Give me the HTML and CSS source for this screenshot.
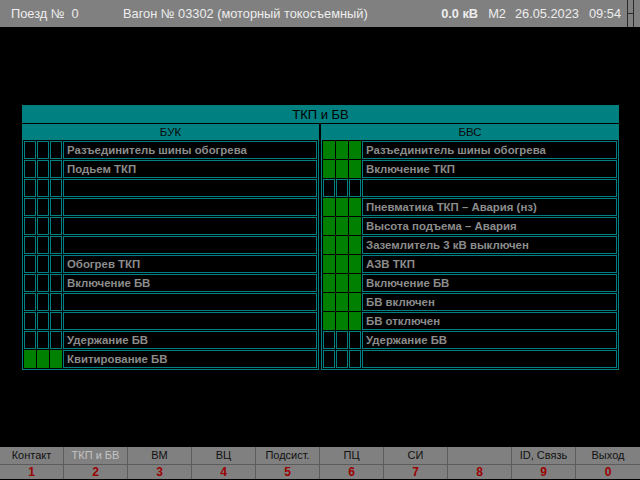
FILE: index.html
```html
<!DOCTYPE html>
<html lang="ru">
<head>
<meta charset="utf-8">
<title>ТКП и БВ</title>
<link rel="stylesheet" href="styles.css">
</head>
<body>
<div class="screen">
  <header class="topbar">
    <span class="train">Поезд №  0</span>
    <span class="wagon">Вагон № 03302 (моторный токосъемный)</span>
    <span class="status">
      <b class="volt">0.0 кВ</b>
      <span class="mode">M2</span>
      <span class="date">26.05.2023</span>
      <span class="time">09:54</span>
    </span>
    <span class="gadget"><i></i></span>
  </header>

  <section class="panel">
    <div class="title">ТКП и БВ</div>
    <div class="halves">
      <div class="half">
        <div class="head">БУК</div>
        <div class="rows">
          <div class="row"><i></i><i></i><i></i><span>Разъединитель шины обогрева</span></div>
          <div class="row"><i></i><i></i><i></i><span>Подьем ТКП</span></div>
          <div class="row"><i></i><i></i><i></i><span></span></div>
          <div class="row"><i></i><i></i><i></i><span></span></div>
          <div class="row"><i></i><i></i><i></i><span></span></div>
          <div class="row"><i></i><i></i><i></i><span></span></div>
          <div class="row"><i></i><i></i><i></i><span>Обогрев ТКП</span></div>
          <div class="row"><i></i><i></i><i></i><span>Включение БВ</span></div>
          <div class="row"><i></i><i></i><i></i><span></span></div>
          <div class="row"><i></i><i></i><i></i><span></span></div>
          <div class="row"><i></i><i></i><i></i><span>Удержание БВ</span></div>
          <div class="row on"><i></i><i></i><i></i><span>Квитирование БВ</span></div>
        </div>
      </div>
      <div class="half">
        <div class="head">БВС</div>
        <div class="rows">
          <div class="row on"><i></i><i></i><i></i><span>Разъединитель шины обогрева</span></div>
          <div class="row on"><i></i><i></i><i></i><span>Включение ТКП</span></div>
          <div class="row"><i></i><i></i><i></i><span></span></div>
          <div class="row on"><i></i><i></i><i></i><span>Пневматика ТКП – Авария (нз)</span></div>
          <div class="row on"><i></i><i></i><i></i><span>Высота подъема – Авария</span></div>
          <div class="row on"><i></i><i></i><i></i><span>Заземлитель 3 кВ выключен</span></div>
          <div class="row on"><i></i><i></i><i></i><span>АЗВ ТКП</span></div>
          <div class="row on"><i></i><i></i><i></i><span>Включение БВ</span></div>
          <div class="row on"><i></i><i></i><i></i><span>БВ включен</span></div>
          <div class="row on"><i></i><i></i><i></i><span>БВ отключен</span></div>
          <div class="row"><i></i><i></i><i></i><span>Удержание БВ</span></div>
          <div class="row"><i></i><i></i><i></i><span></span></div>
        </div>
      </div>
    </div>
  </section>

  <nav class="keys">
    <div class="key"><span class="lbl">Контакт</span><span class="num">1</span></div>
    <div class="key active"><span class="lbl">ТКП и БВ</span><span class="num">2</span></div>
    <div class="key"><span class="lbl">ВМ</span><span class="num">3</span></div>
    <div class="key"><span class="lbl">ВЦ</span><span class="num">4</span></div>
    <div class="key"><span class="lbl">Подсист.</span><span class="num">5</span></div>
    <div class="key"><span class="lbl">ПЦ</span><span class="num">6</span></div>
    <div class="key"><span class="lbl">СИ</span><span class="num">7</span></div>
    <div class="key"><span class="lbl"></span><span class="num">8</span></div>
    <div class="key"><span class="lbl">ID, Связь</span><span class="num">9</span></div>
    <div class="key"><span class="lbl">Выход</span><span class="num">0</span></div>
  </nav>
</div>
</body>
</html>
```

FILE: styles.css
```css
html, body {
  margin: 0;
  padding: 0;
  background: #000;
}

.screen {
  width: 640px;
  height: 480px;
  display: flex;
  flex-direction: column;
  font-family: "Liberation Sans", "DejaVu Sans", sans-serif;
  overflow: hidden;
}

/* top bar */
.topbar {
  height: 27px;
  background: #808080;
  color: #ededed;
  font-size: 12.8px;
  display: flex;
  align-items: center;
  padding-left: 11px;
  white-space: pre;
}
.train { width: 112px; }
.status {
  margin-left: auto;
  display: flex;
  align-items: center;
}
.volt { font-weight: bold; margin-right: 10px; }
.mode { margin-right: 9px; }
.date { margin-right: 10px; }
.gadget {
  align-self: stretch;
  width: 5px;
  margin: 0 6px 0 6px;
  border-left: 1px solid #2a2a2a;
  border-right: 1px solid #2a2a2a;
  display: flex;
  align-items: center;
}
.gadget i {
  display: block;
  width: 100%;
  height: 1px;
  background: #2a2a2a;
}

/* panel */
.panel {
  width: 597px;
  margin: 78px 0 0 22px;
  background: #000;
}
.title {
  height: 18px;
  line-height: 19px;
  background: #008080;
  color: #000;
  text-align: center;
  font-size: 13px;
  margin-bottom: 1px;
}
.halves {
  display: grid;
  grid-template-columns: 297px 298px;
  column-gap: 2px;
}
.half {
  background: #008080;
  padding: 0 1px 1px 1px;
}
.head {
  height: 16px;
  line-height: 17px;
  text-align: center;
  font-size: 11.5px;
  color: #0a0a0a;
}
.rows {
  background: #000;
  padding: 1px;
  display: flex;
  flex-direction: column;
  gap: 1px;
}
.row {
  display: grid;
  grid-template-columns: 12px 12px 12px 1fr;
  column-gap: 1px;
  height: 18px;
}
.row i, .row span {
  display: block;
  border: 1px solid #008080;
  background: #000;
}
.row.on i {
  background: #008000;
  border-color: #008000;
}
.row span {
  color: #8c8c8c;
  font-weight: bold;
  font-size: 11.4px;
  line-height: 17px;
  padding-left: 3px;
  white-space: nowrap;
  overflow: hidden;
}

/* bottom keys */
.keys {
  margin-top: auto;
  margin-bottom: 1px;
  height: 32px;
  background: #808080;
  display: grid;
  grid-template-columns: repeat(10, 64px);
}
.key {
  display: flex;
  flex-direction: column;
  border-right: 1px solid #5c5c5c;
}
.key:last-child { border-right: none; }
.lbl {
  height: 17px;
  line-height: 17px;
  text-align: center;
  font-size: 11px;
  color: #101010;
  border-bottom: 1px solid #5c5c5c;
}
.key.active .lbl { color: #c4c4c4; }
.num {
  flex: 1;
  text-align: center;
  font-size: 12px;
  line-height: 14px;
  font-weight: bold;
  color: #9c0000;
}
```
